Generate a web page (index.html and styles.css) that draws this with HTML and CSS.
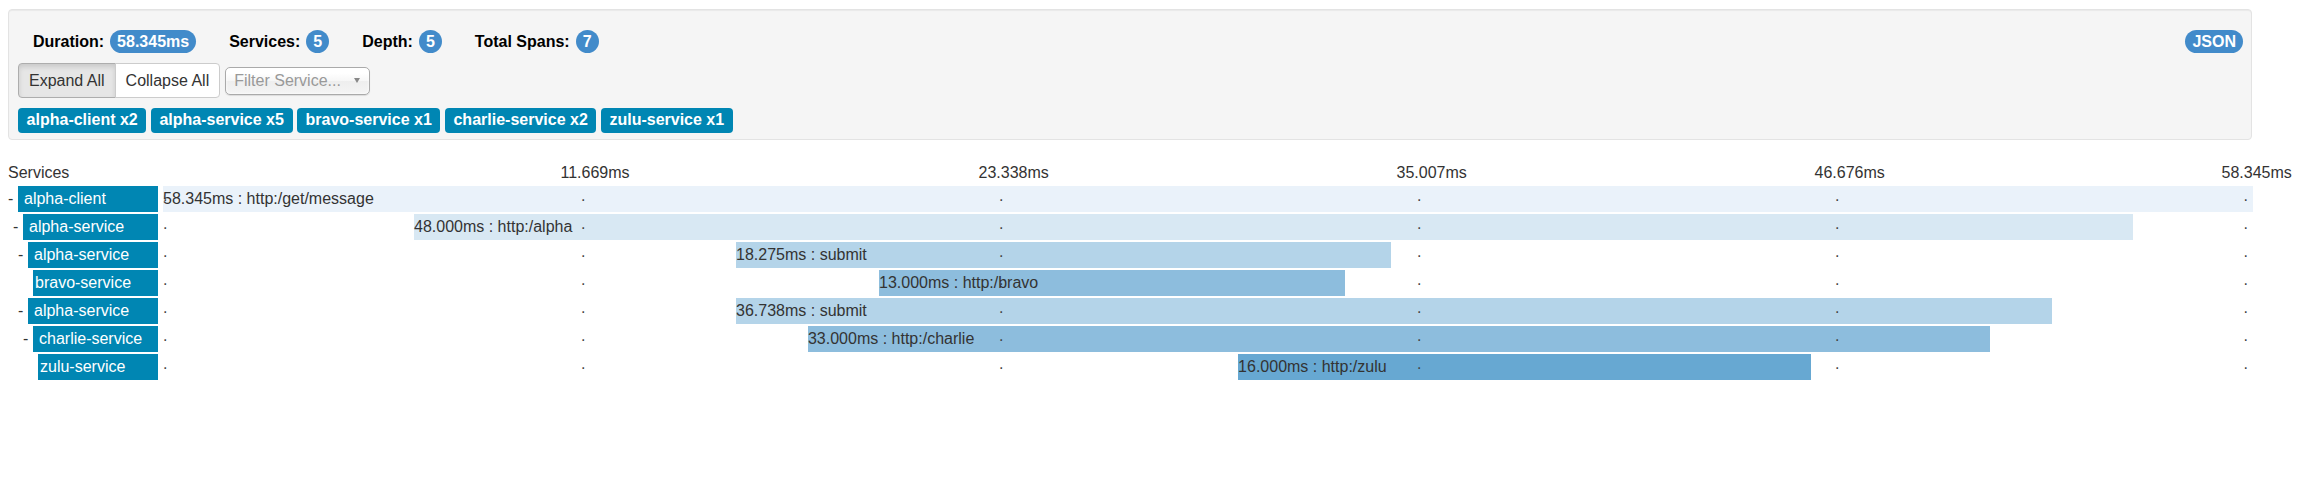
FILE: index.html
```html
<!DOCTYPE html>
<html>
<head>
<meta charset="utf-8">
<title>Trace</title>
<link rel="stylesheet" href="styles.css">
</head>
<body>
<div class="page">
  <div class="well">
    <div class="stats-row">
      <div class="stats">
        <span class="stat"><strong>Duration:</strong><span class="badge">58.345ms</span></span>
        <span class="stat"><strong>Services:</strong><span class="badge">5</span></span>
        <span class="stat"><strong>Depth:</strong><span class="badge">5</span></span>
        <span class="stat"><strong>Total Spans:</strong><span class="badge">7</span></span>
      </div>
      <span class="badge">JSON</span>
    </div>
    <div class="controls">
      <div class="btn-group">
        <button class="btn active">Expand All</button>
        <button class="btn">Collapse All</button>
      </div>
      <div class="chosen"><span class="placeholder">Filter Service...</span><b class="caret"></b></div>
    </div>
    <div class="tags">
      <span class="tag">alpha-client x2</span>
      <span class="tag">alpha-service x5</span>
      <span class="tag">bravo-service x1</span>
      <span class="tag">charlie-service x2</span>
      <span class="tag">zulu-service x1</span>
    </div>
  </div>

  <div class="trace">
    <div class="row header">
      <div class="handle">Services</div>
      <div class="timeline">
        <span class="tick t1">11.669ms</span>
        <span class="tick t2">23.338ms</span>
        <span class="tick t3">35.007ms</span>
        <span class="tick t4">46.676ms</span>
        <span class="tick t5">58.345ms</span>
      </div>
    </div>

    <div class="row">
      <div class="handle d1"><span class="exp">-</span><span class="svc">alpha-client</span></div>
      <div class="timeline">
        <div class="bar c1" style="left:0%;width:100%">58.345ms : http:/get/message</div>
        <span class="dot m0">.</span><span class="dot m1">.</span><span class="dot m2">.</span><span class="dot m3">.</span><span class="dot m4">.</span><span class="dot m5">.</span>
      </div>
    </div>

    <div class="row">
      <div class="handle d2"><span class="exp">-</span><span class="svc">alpha-service</span></div>
      <div class="timeline">
        <div class="bar c2" style="left:12.01%;width:82.27%">48.000ms : http:/alpha</div>
        <span class="dot m0">.</span><span class="dot m1">.</span><span class="dot m2">.</span><span class="dot m3">.</span><span class="dot m4">.</span><span class="dot m5">.</span>
      </div>
    </div>

    <div class="row">
      <div class="handle d3"><span class="exp">-</span><span class="svc">alpha-service</span></div>
      <div class="timeline">
        <div class="bar c3" style="left:27.42%;width:31.32%">18.275ms : submit</div>
        <span class="dot m0">.</span><span class="dot m1">.</span><span class="dot m2">.</span><span class="dot m3">.</span><span class="dot m4">.</span><span class="dot m5">.</span>
      </div>
    </div>

    <div class="row">
      <div class="handle d4"><span class="exp"></span><span class="svc leaf">bravo-service</span></div>
      <div class="timeline">
        <div class="bar c4" style="left:34.26%;width:22.28%">13.000ms : http:/bravo</div>
        <span class="dot m0">.</span><span class="dot m1">.</span><span class="dot m2">.</span><span class="dot m3">.</span><span class="dot m4">.</span><span class="dot m5">.</span>
      </div>
    </div>

    <div class="row">
      <div class="handle d3"><span class="exp">-</span><span class="svc">alpha-service</span></div>
      <div class="timeline">
        <div class="bar c3" style="left:27.42%;width:62.97%">36.738ms : submit</div>
        <span class="dot m0">.</span><span class="dot m1">.</span><span class="dot m2">.</span><span class="dot m3">.</span><span class="dot m4">.</span><span class="dot m5">.</span>
      </div>
    </div>

    <div class="row">
      <div class="handle d4"><span class="exp">-</span><span class="svc">charlie-service</span></div>
      <div class="timeline">
        <div class="bar c4" style="left:30.86%;width:56.56%">33.000ms : http:/charlie</div>
        <span class="dot m0">.</span><span class="dot m1">.</span><span class="dot m2">.</span><span class="dot m3">.</span><span class="dot m4">.</span><span class="dot m5">.</span>
      </div>
    </div>

    <div class="row">
      <div class="handle d5"><span class="exp"></span><span class="svc leaf">zulu-service</span></div>
      <div class="timeline">
        <div class="bar c5" style="left:51.44%;width:27.42%">16.000ms : http:/zulu</div>
        <span class="dot m0">.</span><span class="dot m1">.</span><span class="dot m2">.</span><span class="dot m3">.</span><span class="dot m4">.</span><span class="dot m5">.</span>
      </div>
    </div>
  </div>
</div>
</body>
</html>
```

FILE: styles.css
```css
* { box-sizing: border-box; }

body {
  margin: 8px;
  font-family: "Liberation Sans", Arial, sans-serif;
  font-size: 16px;
  color: #333;
  background: #fff;
}

.page { width: 2245px; }

/* summary panel */
.well {
  width: 2244px;
  margin-top: 1px;
  padding: 20px 8px 6px 9px;
  background: #f5f5f5;
  border: 1px solid #e3e3e3;
  border-radius: 4px;
  box-shadow: inset 0 1px 1px rgba(0, 0, 0, 0.05);
}

.stats-row {
  display: flex;
  justify-content: space-between;
  align-items: center;
  height: 23px;
}

.stats {
  display: flex;
  align-items: center;
  gap: 33px;
  padding-left: 15px;
}

.stat {
  display: flex;
  align-items: center;
  gap: 6px;
}

.stat strong { color: #000; font-weight: bold; }

.badge {
  display: inline-block;
  padding: 4px 7px 3px;
  font-size: 16px;
  font-weight: bold;
  line-height: 16px;
  color: #fff;
  background: #428bca;
  border-radius: 12px;
}

.controls {
  display: flex;
  align-items: center;
  margin-top: 10px;
  height: 35px;
}

.btn-group { display: flex; }

.btn {
  font-family: "Liberation Sans", Arial, sans-serif;
  font-size: 16px;
  line-height: 23px;
  padding: 5px 10px;
  height: 35px;
  color: #333;
  background: #fff;
  border: 1px solid #ccc;
  margin: 0;
}

.btn:first-child { border-radius: 4px 0 0 4px; }
.btn + .btn { margin-left: -1px; border-radius: 0 4px 4px 0; }

.btn.active {
  background: #e6e6e6;
  border-color: #adadad;
  box-shadow: inset 0 3px 5px rgba(0, 0, 0, 0.125);
}

.chosen {
  display: flex;
  align-items: center;
  justify-content: space-between;
  margin-left: 5px;
  width: 145px;
  height: 28px;
  padding: 0 9px 0 8px;
  border: 1px solid #aaa;
  border-radius: 5px;
  background: linear-gradient(#fff 20%, #f6f6f6 50%, #eee 52%, #f4f4f4 100%);
  box-shadow: inset 0 0 3px #fff, 0 1px 1px rgba(0, 0, 0, 0.1);
  color: #999;
  white-space: nowrap;
}

.caret {
  width: 0;
  height: 0;
  border-left: 3.5px solid transparent;
  border-right: 3.5px solid transparent;
  border-top: 5px solid #888;
}

.tags {
  display: flex;
  gap: 4.45px;
  margin-top: 10px;
}

.tag {
  display: inline-block;
  padding: 4px 8.6px 5px;
  font-weight: bold;
  line-height: 16px;
  color: #fff;
  background: #0086b3;
  border-radius: 4px;
  white-space: nowrap;
}

/* trace timeline */
.trace {
  margin-top: 21px;
  display: flex;
  flex-direction: column;
  gap: 2px;
}

.row {
  display: flex;
  height: 26px;
  line-height: 26px;
}

.row.header {
  height: 23px;
  line-height: 23px;
}

.handle {
  flex: none;
  width: 155px;
  display: flex;
  padding-right: 5px;
  white-space: nowrap;
}

.d1 { padding-left: 0; }
.d2 { padding-left: 5px; }
.d3 { padding-left: 10px; }
.d4 { padding-left: 15px; }
.d5 { padding-left: 20px; }

.exp {
  flex: none;
  width: 10px;
}

.svc {
  flex: 1;
  background: #0086b3;
  color: #fff;
  padding-left: 6px;
}

.svc.leaf { padding-left: 2px; }

.timeline {
  position: relative;
  flex: 1;
  width: 2090px;
}

.tick {
  position: absolute;
  top: 0;
  white-space: nowrap;
}

.t1 { left: calc(20% - 20.5px); }
.t2 { left: calc(40% - 20.5px); }
.t3 { left: calc(60% - 20.5px); }
.t4 { left: calc(80% - 20.5px); }
.t5 { left: calc(100% - 31.5px); }

.bar {
  position: absolute;
  top: 0;
  height: 26px;
  white-space: nowrap;
  color: #333;
}

.c1 { background: #eaf2fa; }
.c2 { background: #d8e8f3; }
.c3 { background: #b4d4e9; }
.c4 { background: #8dbddd; }
.c5 { background: #67a8d2; }

.dot {
  position: absolute;
  top: 0;
  line-height: 20px;
  color: #444;
}

.m0 { left: 0; }
.m1 { left: 20%; }
.m2 { left: 40%; }
.m3 { left: 60%; }
.m4 { left: 80%; }
.m5 { left: calc(100% - 9.5px); }
```
